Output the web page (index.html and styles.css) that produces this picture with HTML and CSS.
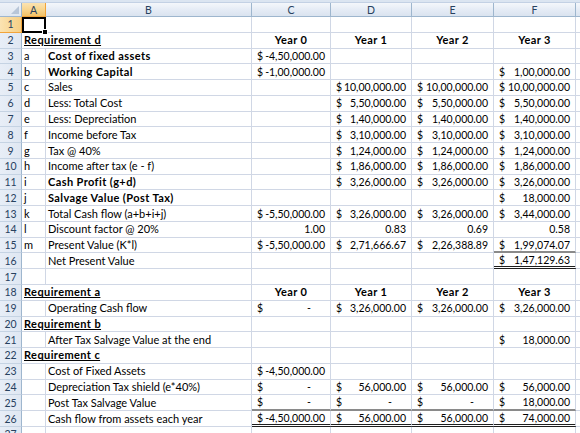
FILE: index.html
```html
<!DOCTYPE html>
<html>
<head>
<meta charset="utf-8">
<link rel="stylesheet" href="styles.css">
</head>
<body>
<div class="topbar"></div>
<div class="sheet">
  <div class="row">
    <div class="hd corner"><span class="tri"></span></div>
    <div class="hd sel">A</div><div class="hd">B</div><div class="hd">C</div><div class="hd">D</div><div class="hd">E</div><div class="hd">F</div><div class="hd last"></div>
  </div>
  <div class="row">
    <div class="rh sel">1</div>
    <div class="c active"><span class="handle"></span></div><div class="c"></div><div class="c"></div><div class="c"></div><div class="c"></div><div class="c"></div><div class="c last"></div>
  </div>
  <div class="row">
    <div class="rh">2</div>
    <div class="c span2 b u">Requirement d</div><div class="c ctr b">Year 0</div><div class="c ctr b">Year 1</div><div class="c ctr b">Year 2</div><div class="c ctr b">Year 3</div><div class="c last"></div>
  </div>
  <div class="row">
    <div class="rh">3</div>
    <div class="c">a</div><div class="c b">Cost of fixed assets</div><div class="c acc"><span>$</span><span>-4,50,000.00</span></div><div class="c"></div><div class="c"></div><div class="c"></div><div class="c last"></div>
  </div>
  <div class="row">
    <div class="rh">4</div>
    <div class="c">b</div><div class="c b">Working Capital</div><div class="c acc"><span>$</span><span>-1,00,000.00</span></div><div class="c"></div><div class="c"></div><div class="c acc"><span>$</span><span>1,00,000.00</span></div><div class="c last"></div>
  </div>
  <div class="row">
    <div class="rh">5</div>
    <div class="c">c</div><div class="c">Sales</div><div class="c"></div><div class="c acc"><span>$</span><span>10,00,000.00</span></div><div class="c acc"><span>$</span><span>10,00,000.00</span></div><div class="c acc"><span>$</span><span>10,00,000.00</span></div><div class="c last"></div>
  </div>
  <div class="row">
    <div class="rh">6</div>
    <div class="c">d</div><div class="c">Less: Total Cost</div><div class="c"></div><div class="c acc"><span>$</span><span>5,50,000.00</span></div><div class="c acc"><span>$</span><span>5,50,000.00</span></div><div class="c acc"><span>$</span><span>5,50,000.00</span></div><div class="c last"></div>
  </div>
  <div class="row">
    <div class="rh">7</div>
    <div class="c">e</div><div class="c">Less: Depreciation</div><div class="c"></div><div class="c acc"><span>$</span><span>1,40,000.00</span></div><div class="c acc"><span>$</span><span>1,40,000.00</span></div><div class="c acc"><span>$</span><span>1,40,000.00</span></div><div class="c last"></div>
  </div>
  <div class="row">
    <div class="rh">8</div>
    <div class="c">f</div><div class="c">Income before Tax</div><div class="c"></div><div class="c acc"><span>$</span><span>3,10,000.00</span></div><div class="c acc"><span>$</span><span>3,10,000.00</span></div><div class="c acc"><span>$</span><span>3,10,000.00</span></div><div class="c last"></div>
  </div>
  <div class="row">
    <div class="rh">9</div>
    <div class="c">g</div><div class="c">Tax @ 40%</div><div class="c"></div><div class="c acc"><span>$</span><span>1,24,000.00</span></div><div class="c acc"><span>$</span><span>1,24,000.00</span></div><div class="c acc"><span>$</span><span>1,24,000.00</span></div><div class="c last"></div>
  </div>
  <div class="row">
    <div class="rh">10</div>
    <div class="c">h</div><div class="c">Income after tax (e - f)</div><div class="c"></div><div class="c acc"><span>$</span><span>1,86,000.00</span></div><div class="c acc"><span>$</span><span>1,86,000.00</span></div><div class="c acc"><span>$</span><span>1,86,000.00</span></div><div class="c last"></div>
  </div>
  <div class="row">
    <div class="rh">11</div>
    <div class="c">i</div><div class="c b">Cash Profit (g+d)</div><div class="c"></div><div class="c acc"><span>$</span><span>3,26,000.00</span></div><div class="c acc"><span>$</span><span>3,26,000.00</span></div><div class="c acc"><span>$</span><span>3,26,000.00</span></div><div class="c last"></div>
  </div>
  <div class="row">
    <div class="rh">12</div>
    <div class="c">j</div><div class="c b">Salvage Value (Post Tax)</div><div class="c"></div><div class="c"></div><div class="c"></div><div class="c acc"><span>$</span><span>18,000.00</span></div><div class="c last"></div>
  </div>
  <div class="row">
    <div class="rh">13</div>
    <div class="c">k</div><div class="c">Total Cash flow (a+b+i+j)</div><div class="c acc"><span>$</span><span>-5,50,000.00</span></div><div class="c acc"><span>$</span><span>3,26,000.00</span></div><div class="c acc"><span>$</span><span>3,26,000.00</span></div><div class="c acc"><span>$</span><span>3,44,000.00</span></div><div class="c last"></div>
  </div>
  <div class="row">
    <div class="rh">14</div>
    <div class="c">l</div><div class="c">Discount factor @ 20%</div><div class="c num">1.00</div><div class="c num">0.83</div><div class="c num">0.69</div><div class="c num">0.58</div><div class="c last"></div>
  </div>
  <div class="row">
    <div class="rh">15</div>
    <div class="c">m</div><div class="c">Present Value (K*l)</div><div class="c acc"><span>$</span><span>-5,50,000.00</span></div><div class="c acc"><span>$</span><span>2,71,666.67</span></div><div class="c acc"><span>$</span><span>2,26,388.89</span></div><div class="c acc sub"><span>$</span><span>1,99,074.07</span></div><div class="c last"></div>
  </div>
  <div class="row">
    <div class="rh">16</div>
    <div class="c"></div><div class="c">Net Present Value</div><div class="c"></div><div class="c"></div><div class="c"></div><div class="c acc total"><span>$</span><span>1,47,129.63</span></div><div class="c last"></div>
  </div>
  <div class="row">
    <div class="rh">17</div>
    <div class="c"></div><div class="c"></div><div class="c"></div><div class="c"></div><div class="c"></div><div class="c"></div><div class="c last"></div>
  </div>
  <div class="row">
    <div class="rh">18</div>
    <div class="c span2 b u">Requirement a</div><div class="c ctr b">Year 0</div><div class="c ctr b">Year 1</div><div class="c ctr b">Year 2</div><div class="c ctr b">Year 3</div><div class="c last"></div>
  </div>
  <div class="row">
    <div class="rh">19</div>
    <div class="c"></div><div class="c">Operating Cash flow</div><div class="c acc"><span>$</span><span class="dash">-</span></div><div class="c acc"><span>$</span><span>3,26,000.00</span></div><div class="c acc"><span>$</span><span>3,26,000.00</span></div><div class="c acc"><span>$</span><span>3,26,000.00</span></div><div class="c last"></div>
  </div>
  <div class="row">
    <div class="rh">20</div>
    <div class="c span2 b u">Requirement b</div><div class="c"></div><div class="c"></div><div class="c"></div><div class="c"></div><div class="c last"></div>
  </div>
  <div class="row">
    <div class="rh">21</div>
    <div class="c"></div><div class="c">After Tax Salvage Value at the end</div><div class="c"></div><div class="c"></div><div class="c"></div><div class="c acc"><span>$</span><span>18,000.00</span></div><div class="c last"></div>
  </div>
  <div class="row">
    <div class="rh">22</div>
    <div class="c span2 b u">Requirement c</div><div class="c"></div><div class="c"></div><div class="c"></div><div class="c"></div><div class="c last"></div>
  </div>
  <div class="row">
    <div class="rh">23</div>
    <div class="c"></div><div class="c">Cost of Fixed Assets</div><div class="c acc"><span>$</span><span>-4,50,000.00</span></div><div class="c"></div><div class="c"></div><div class="c"></div><div class="c last"></div>
  </div>
  <div class="row">
    <div class="rh">24</div>
    <div class="c"></div><div class="c">Depreciation Tax shield (e*40%)</div><div class="c acc"><span>$</span><span class="dash">-</span></div><div class="c acc"><span>$</span><span>56,000.00</span></div><div class="c acc"><span>$</span><span>56,000.00</span></div><div class="c acc"><span>$</span><span>56,000.00</span></div><div class="c last"></div>
  </div>
  <div class="row">
    <div class="rh">25</div>
    <div class="c"></div><div class="c">Post Tax Salvage Value</div><div class="c acc sub"><span>$</span><span class="dash">-</span></div><div class="c acc sub"><span>$</span><span class="dash">-</span></div><div class="c acc sub"><span>$</span><span class="dash">-</span></div><div class="c acc sub"><span>$</span><span>18,000.00</span></div><div class="c last"></div>
  </div>
  <div class="row">
    <div class="rh">26</div>
    <div class="c"></div><div class="c">Cash flow from assets each year</div><div class="c acc total"><span>$</span><span>-4,50,000.00</span></div><div class="c acc total"><span>$</span><span>56,000.00</span></div><div class="c acc total"><span>$</span><span>56,000.00</span></div><div class="c acc total"><span>$</span><span>74,000.00</span></div><div class="c last"></div>
  </div>
  <div class="row">
    <div class="rh">27</div>
    <div class="c"></div><div class="c"></div><div class="c"></div><div class="c"></div><div class="c"></div><div class="c"></div><div class="c last"></div>
  </div>
</div>
</body>
</html>
```
FILE: styles.css
```css
* { box-sizing: border-box; }
html, body { margin: 0; padding: 0; background: #ffffff; }
body {
  font-family: Lato, "Liberation Sans", sans-serif;
  font-size: 11px;
  color: #000;
  width: 580px;
  height: 433px;
  overflow: hidden;
}
.topbar {
  height: 3px;
  background: #dbe5f1;
  border-bottom: 1px solid #c3d1e4;
}
.sheet {
  display: grid;
  grid-template-columns: 22px 24px 206px 79px 81px 82px 82px 1fr;
  grid-template-rows: 14px;
  grid-auto-rows: 15.77px;
}
.row { display: contents; }
.hd {
  background: linear-gradient(#f4f7fb, #e4ebf5 55%, #dae3ef);
  border-right: 1px solid #9eb6ce;
  border-bottom: 1px solid #9eb6ce;
  color: #27415f;
  font-size: 10.5px;
  display: flex;
  align-items: center;
  justify-content: center;
  position: relative;
}
.hd.sel {
  background: linear-gradient(#fbe3b2, #f8d48c 55%, #f2c267);
  border-right-color: #f2a43a;
  border-bottom-color: #f2a43a;
}
.hd.last { border-right: none; }
.corner { background: linear-gradient(#eef2f8, #dfe7f1); }
.tri {
  position: absolute;
  right: 2px;
  bottom: 2px;
  width: 0;
  height: 0;
  border-left: 8px solid transparent;
  border-bottom: 8px solid #b8c6d8;
}
.rh {
  background: linear-gradient(90deg, #e8eef7, #dfe7f2);
  border-right: 1px solid #9eb6ce;
  border-bottom: 1px solid #c5d3e3;
  color: #27415f;
  font-size: 10.5px;
  display: flex;
  align-items: center;
  justify-content: center;
}
.rh.sel {
  background: linear-gradient(90deg, #fbe3b2, #f6cf84);
  border-right-color: #f2a43a;
  border-bottom-color: #f2a43a;
}
.c {
  border-right: 1px solid #d0d7e5;
  border-bottom: 1px solid #d0d7e5;
  padding: 0 2px;
  display: flex;
  align-items: center;
  white-space: nowrap;
  overflow: visible;
  line-height: 14px;
}
.c.last { border-right: none; }
.span2 { grid-column: span 2; }
.b { font-weight: 700; letter-spacing: 0.4px; }
.u { text-decoration: underline; }
.ctr { justify-content: center; }
.num { justify-content: flex-end; padding-right: 5px; font-size: 10.5px; }
.acc { justify-content: space-between; padding: 0 5px 0 5px; font-size: 10.5px; }
.dash { padding-right: 14px; }
.sub { border-bottom: 2px solid #8a8a8a; }
.total { border-bottom: 3px double #1e1e1e; }
.active {
  position: relative;
  border: 2px solid #000;
}
.handle {
  position: absolute;
  right: -4px;
  bottom: -4px;
  width: 6px;
  height: 6px;
  background: #000;
  border: 1px solid #fff;
}
```
